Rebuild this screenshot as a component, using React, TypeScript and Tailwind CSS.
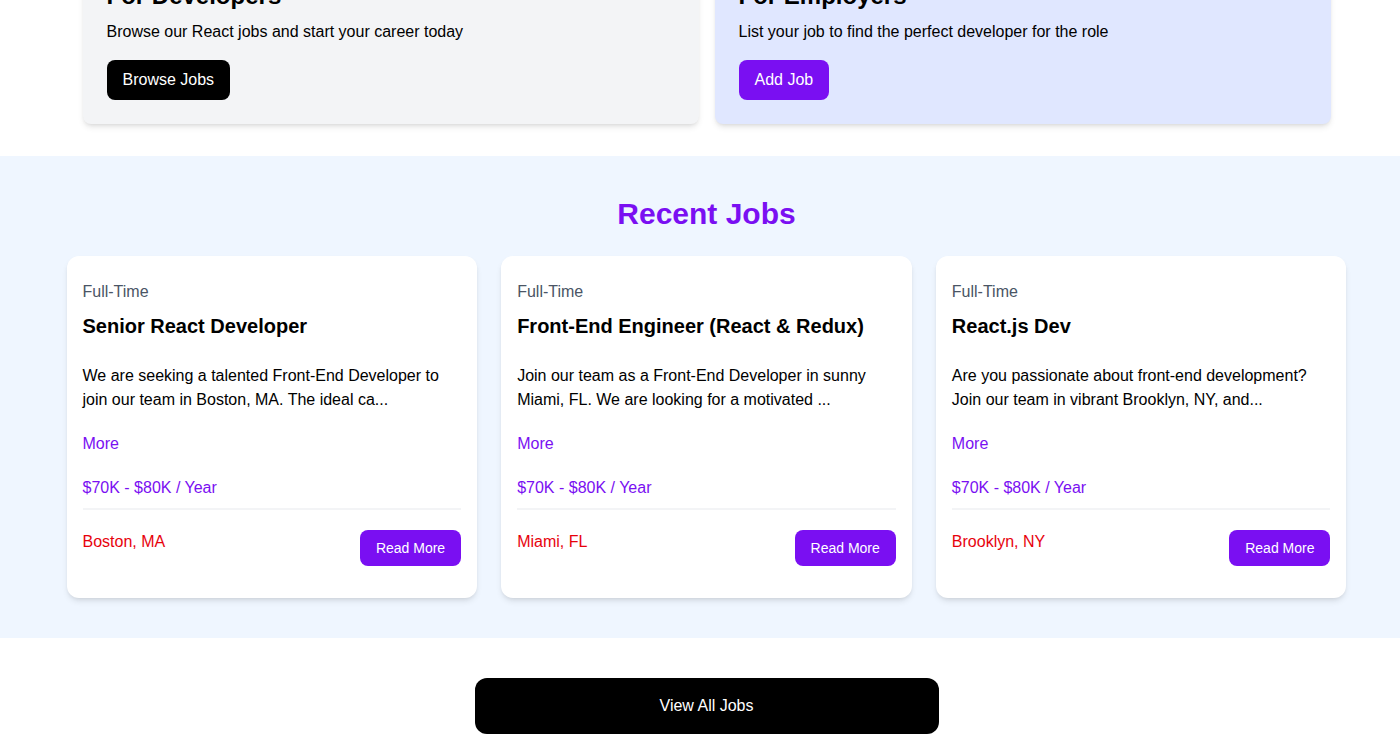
import React from 'react';

const jobs = [
  {
    type: 'Full-Time',
    title: 'Senior React Developer',
    description:
      'We are seeking a talented Front-End Developer to join our team in Boston, MA. The ideal ca...',
    salary: '$70K - $80K',
    location: 'Boston, MA',
  },
  {
    type: 'Full-Time',
    title: 'Front-End Engineer (React & Redux)',
    description:
      'Join our team as a Front-End Developer in sunny Miami, FL. We are looking for a motivated ...',
    salary: '$70K - $80K',
    location: 'Miami, FL',
  },
  {
    type: 'Full-Time',
    title: 'React.js Dev',
    description:
      'Are you passionate about front-end development? Join our team in vibrant Brooklyn, NY, and...',
    salary: '$70K - $80K',
    location: 'Brooklyn, NY',
  },
];

function HomeCards() {
  return (
    <section className="py-4 -mt-[76px]">
      <div className="max-w-[1280px] mx-auto">
        <div className="grid grid-cols-2 gap-4 p-4 rounded-lg">
          <div className="bg-gray-100 p-6 rounded-lg shadow-md">
            <h2 className="text-2xl font-bold">For Developers</h2>
            <p className="mt-2 mb-4">Browse our React jobs and start your career today</p>
            <a href="#" className="inline-block bg-black text-white rounded-lg px-4 py-2">
              Browse Jobs
            </a>
          </div>
          <div className="bg-indigo-100 p-6 rounded-lg shadow-md">
            <h2 className="text-2xl font-bold">For Employers</h2>
            <p className="mt-2 mb-4">List your job to find the perfect developer for the role</p>
            <a href="#" className="inline-block bg-[#7a0ff2] text-white rounded-lg px-4 py-2">
              Add Job
            </a>
          </div>
        </div>
      </div>
    </section>
  );
}

function JobListing({ job }: { job: (typeof jobs)[number] }) {
  return (
    <div className="bg-white rounded-xl shadow-md">
      <div className="p-4">
        <div className="mb-6">
          <div className="text-gray-600 my-2">{job.type}</div>
          <h3 className="text-xl font-bold">{job.title}</h3>
        </div>
        <div className="mb-5">{job.description}</div>
        <button className="block text-[#7a0ff2] mb-5">More</button>
        <h3 className="text-[#7a0ff2] mb-2">{job.salary} / Year</h3>
        <div className="border border-gray-100 mb-5"></div>
        <div className="flex flex-row justify-between mb-4">
          <div className="text-red-600 mb-3">{job.location}</div>
          <a
            href="#"
            className="h-[36px] bg-[#7a0ff2] text-white px-4 py-2 rounded-lg text-center text-sm"
          >
            Read More
          </a>
        </div>
      </div>
    </div>
  );
}

export default function App() {
  return (
    <div className="w-full overflow-hidden font-['Liberation_Sans',Arial,sans-serif] text-black bg-white">
      <div className="w-[1413px]">
        <HomeCards />

        <section className="bg-blue-50 px-4 py-10">
          <div className="max-w-[1280px] mx-auto">
            <h2 className="text-3xl font-bold text-[#7a0ff2] mb-6 text-center">Recent Jobs</h2>
            <div className="grid grid-cols-3 gap-6">
              {jobs.map((job) => (
                <JobListing key={job.title} job={job} />
              ))}
            </div>
          </div>
        </section>

        <section className="mx-auto max-w-lg my-10 px-6">
          <a href="#" className="block bg-black text-white text-center py-4 px-6 rounded-xl">
            View All Jobs
          </a>
        </section>
      </div>
    </div>
  );
}
